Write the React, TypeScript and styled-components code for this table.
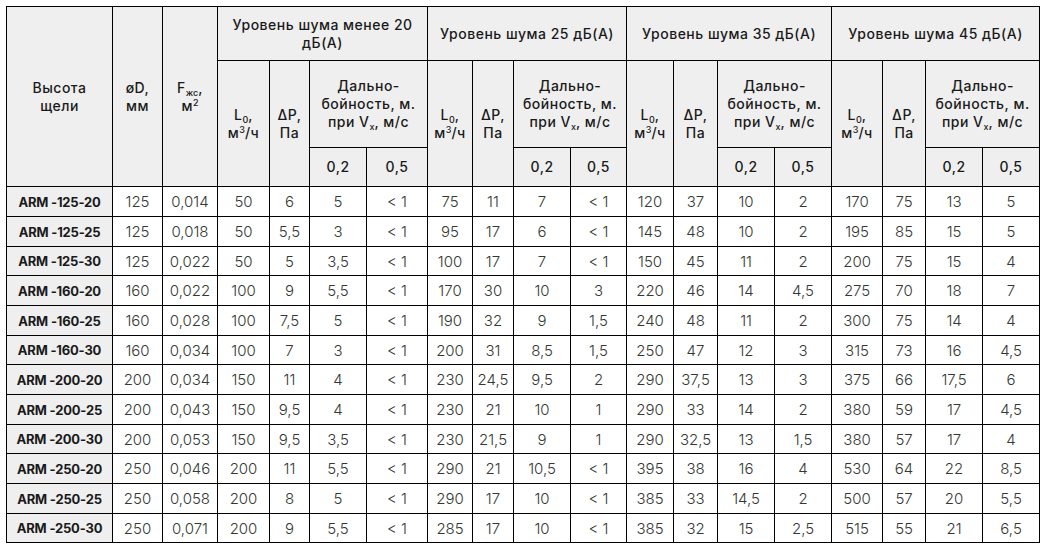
import { createGlobalStyle, styled } from "styled-components";

const GlobalStyle = createGlobalStyle`
  html, body {
    margin: 0;
    padding: 0;
    background: #ffffff;
  }
  body {
    font-family: Inter, "Noto Sans", "Liberation Sans", sans-serif;
  }
`;

const Page = styled.div`
  padding: 6px 0 0 6px;
`;

const Table = styled.table`
  border-collapse: collapse;
  table-layout: fixed;
  width: 1033px;
  color: #1a1a1a;
`;

const HeadCell = styled.th<{ $h?: number }>`
  border: 1px solid #000;
  background: #efefef;
  font-weight: 500;
  font-size: 14px;
  line-height: 18px;
  letter-spacing: 0.5px;
  text-align: center;
  vertical-align: middle;
  padding: 0 2px;
  height: ${(p) => (p.$h ? `${p.$h}px` : "auto")};
`;

const ModelCell = styled.th`
  border: 1px solid #000;
  background: #efefef;
  font-weight: 700;
  font-size: 13px;
  text-align: center;
  white-space: nowrap;
  padding: 0;
  letter-spacing: -0.2px;
`;

const DataCell = styled.td`
  border: 1px solid #000;
  font-weight: 300;
  font-size: 15px;
  color: #333833;
  text-align: center;
  padding: 0;
  white-space: nowrap;
`;

const BodyRow = styled.tr`
  height: 30px;
  &:nth-child(3n) {
    height: 29px;
  }
`;

const Sub = styled.sub`
  font-size: 9px;
  vertical-align: -3px;
  line-height: 0;
  letter-spacing: 0;
`;

const Sup = styled.sup`
  font-size: 9px;
  vertical-align: 5px;
  line-height: 0;
  letter-spacing: 0;
`;

const widths = [
  106, 50, 55,
  52, 40, 57, 61,
  45, 41, 57, 56,
  47, 44, 57, 57,
  51, 43, 57, 57,
];

const groups = [
  "Уровень шума менее 20 дБ(А)",
  "Уровень шума 25 дБ(А)",
  "Уровень шума 35 дБ(А)",
  "Уровень шума 45 дБ(А)",
];

const rows: string[][] = [
  ["ARM -125-20", "125", "0,014", "50", "6", "5", "< 1", "75", "11", "7", "< 1", "120", "37", "10", "2", "170", "75", "13", "5"],
  ["ARM -125-25", "125", "0,018", "50", "5,5", "3", "< 1", "95", "17", "6", "< 1", "145", "48", "10", "2", "195", "85", "15", "5"],
  ["ARM -125-30", "125", "0,022", "50", "5", "3,5", "< 1", "100", "17", "7", "< 1", "150", "45", "11", "2", "200", "75", "15", "4"],
  ["ARM -160-20", "160", "0,022", "100", "9", "5,5", "< 1", "170", "30", "10", "3", "220", "46", "14", "4,5", "275", "70", "18", "7"],
  ["ARM -160-25", "160", "0,028", "100", "7,5", "5", "< 1", "190", "32", "9", "1,5", "240", "48", "11", "2", "300", "75", "14", "4"],
  ["ARM -160-30", "160", "0,034", "100", "7", "3", "< 1", "200", "31", "8,5", "1,5", "250", "47", "12", "3", "315", "73", "16", "4,5"],
  ["ARM -200-20", "200", "0,034", "150", "11", "4", "< 1", "230", "24,5", "9,5", "2", "290", "37,5", "13", "3", "375", "66", "17,5", "6"],
  ["ARM -200-25", "200", "0,043", "150", "9,5", "4", "< 1", "230", "21", "10", "1", "290", "33", "14", "2", "380", "59", "17", "4,5"],
  ["ARM -200-30", "200", "0,053", "150", "9,5", "3,5", "< 1", "230", "21,5", "9", "1", "290", "32,5", "13", "1,5", "380", "57", "17", "4"],
  ["ARM -250-20", "250", "0,046", "200", "11", "5,5", "< 1", "290", "21", "10,5", "< 1", "395", "38", "16", "4", "530", "64", "22", "8,5"],
  ["ARM -250-25", "250", "0,058", "200", "8", "5", "< 1", "290", "17", "10", "< 1", "385", "33", "14,5", "2", "500", "57", "20", "5,5"],
  ["ARM -250-30", "250", "0,071", "200", "9", "5,5", "< 1", "285", "17", "10", "< 1", "385", "32", "15", "2,5", "515", "55", "21", "6,5"],
];

export default function App() {
  return (
    <Page>
      <GlobalStyle />
      <Table>
        <colgroup>
          {widths.map((w, i) => (
            <col key={i} style={{ width: w }} />
          ))}
        </colgroup>
        <thead>
          <tr>
            <HeadCell rowSpan={3}>
              Высота
              <br />
              щели
            </HeadCell>
            <HeadCell rowSpan={3}>
              øD,
              <br />
              мм
            </HeadCell>
            <HeadCell rowSpan={3}>
              F<Sub>жс</Sub>,
              <br />
              м<Sup>2</Sup>
            </HeadCell>
            {groups.map((g) => (
              <HeadCell key={g} colSpan={4} $h={53}>
                {g}
              </HeadCell>
            ))}
          </tr>
          <tr>
            {groups.map((g) => [
              <HeadCell key={g + "l"} rowSpan={2}>
                L<Sub>0</Sub>,
                <br />
                м<Sup>3</Sup>/ч
              </HeadCell>,
              <HeadCell key={g + "p"} rowSpan={2}>
                ΔP,
                <br />
                Па
              </HeadCell>,
              <HeadCell key={g + "d"} colSpan={2} $h={86}>
                Дально-
                <br />
                бойность, м.
                <br />
                при V<Sub>x</Sub>, м/с
              </HeadCell>,
            ])}
          </tr>
          <tr>
            {groups.map((g) => [
              <HeadCell key={g + "a"} $h={38}>
                0,2
              </HeadCell>,
              <HeadCell key={g + "b"} $h={38}>
                0,5
              </HeadCell>,
            ])}
          </tr>
        </thead>
        <tbody>
          {rows.map((r) => (
            <BodyRow key={r[0]}>
              <ModelCell>{r[0]}</ModelCell>
              {r.slice(1).map((v, i) => (
                <DataCell key={i}>{v}</DataCell>
              ))}
            </BodyRow>
          ))}
        </tbody>
      </Table>
    </Page>
  );
}
